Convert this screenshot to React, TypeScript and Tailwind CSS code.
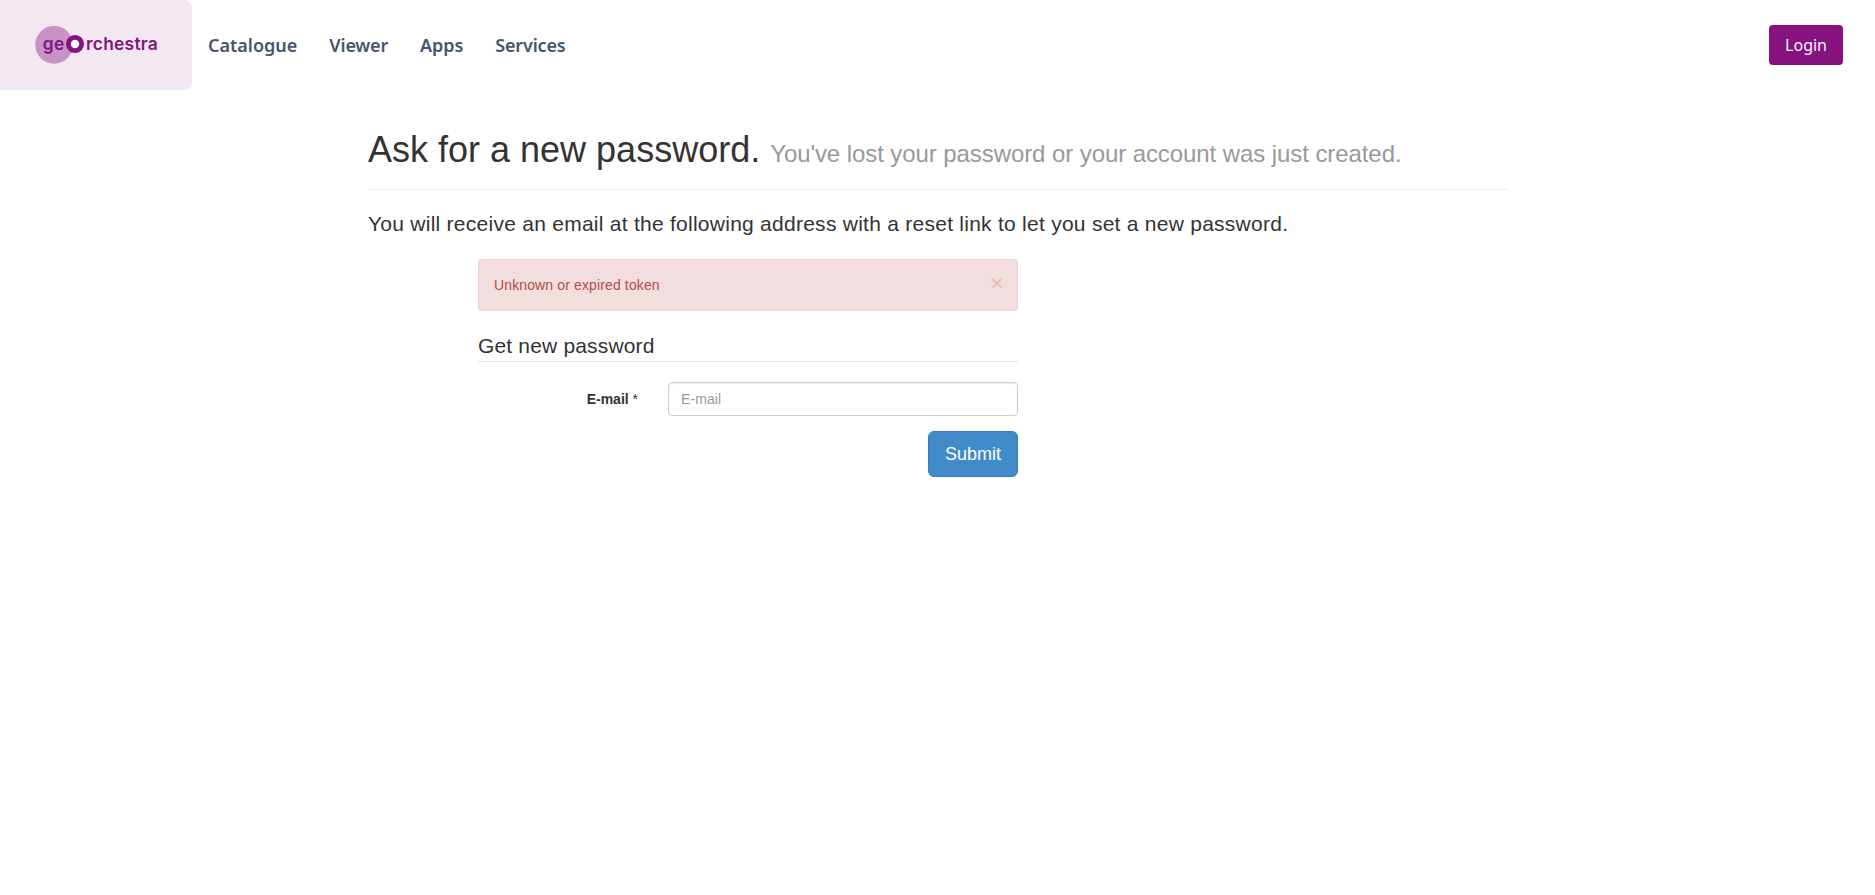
const links = [
  { label: 'Catalogue', tracking: '' },
  { label: 'Viewer', tracking: 'tracking-[-0.2px]' },
  { label: 'Apps', tracking: 'tracking-[-0.1px]' },
  { label: 'Services', tracking: 'tracking-[-0.15px]' },
];

function Logo() {
  return (
    <svg width="124" height="40" viewBox="35 25 124 40" role="img" aria-label="geOrchestra">
      <circle cx="54.1" cy="44.8" r="18.9" fill="#c893c4" />
      <g fill="#85127e" fontFamily="Inter, sans-serif" fontWeight="600" fontSize="17.4">
        <text x="42.8" y="49.6" textLength="21.5">ge</text>
        <text x="86" y="49.6" textLength="71.8">rchestra</text>
      </g>
      <circle cx="75" cy="44" r="6.65" fill="#fff" stroke="#85127e" strokeWidth="4.8" />
    </svg>
  );
}

function Header() {
  return (
    <header className="flex h-[90px] items-center font-['Noto_Sans',sans-serif]">
      <a className="flex h-full w-48 items-center rounded-r-lg bg-[#f3e7f1] pl-[35px]">
        <Logo />
      </a>
      <nav className="ml-4 flex grow gap-8 text-lg font-semibold text-slate-600">
        {links.map((l) => (
          <a key={l.label} className={l.tracking}>
            {l.label}
          </a>
        ))}
      </nav>
      <a className="mr-8 rounded bg-[#85127e] px-4 py-2 text-base text-slate-100">Login</a>
    </header>
  );
}

export default function App() {
  return (
    <div className="min-h-screen bg-white font-['Liberation_Sans',sans-serif] text-sm leading-5 text-[#333]">
      <Header />
      <main className="ml-[368px] w-[1140px] pt-10">
        <div className="mb-5 h-[60px] border-b border-[#eee]">
          <h1 className="text-4xl leading-[1.1]">
            Ask for a new password.{' '}
            <small className="text-2xl leading-none tracking-[-0.08px] text-[#999]">
              You've lost your password or your account was just created.
            </small>
          </h1>
        </div>
        <p className="mb-[21px] text-[21px] leading-7 tracking-[0.26px]">
          You will receive an email at the following address with a reset link to let you set a new password.
        </p>
        <form className="ml-[110px] w-[540px]" onSubmit={(e) => e.preventDefault()}>
          <div className="mb-5 flex items-start justify-between rounded border border-[#eed3d7] bg-[#f2dede] p-[15px] pr-3.5 text-[#b94a48]">
            <span className="tracking-[0.13px]">Unknown or expired token</span>
            <button type="button" className="-mt-[3px] h-5 text-[21px] leading-none font-bold text-[#b94a48] opacity-20">
              ×
            </button>
          </div>
          <h2 className="mb-5 border-b border-[#e5e5e5] text-[21px] leading-[30px] tracking-[0.17px]">
            Get new password
          </h2>
          <div className="mb-[15px] flex items-center">
            <label htmlFor="email" className="w-40 text-right font-bold">
              E-mail <span className="font-normal">*</span>
            </label>
            <input
              id="email"
              placeholder="E-mail"
              className="ml-[30px] h-[34px] w-[350px] rounded border border-[#ccc] px-3 text-sm tracking-[0.1px] shadow-[inset_0_1px_1px_rgba(0,0,0,0.075)] placeholder:text-[#999]"
            />
          </div>
          <div className="flex justify-end">
            <button className="h-[46px] w-[90px] rounded-md border border-[#357ebd] bg-[#428bca] text-lg leading-6 text-white">
              Submit
            </button>
          </div>
        </form>
      </main>
    </div>
  );
}
